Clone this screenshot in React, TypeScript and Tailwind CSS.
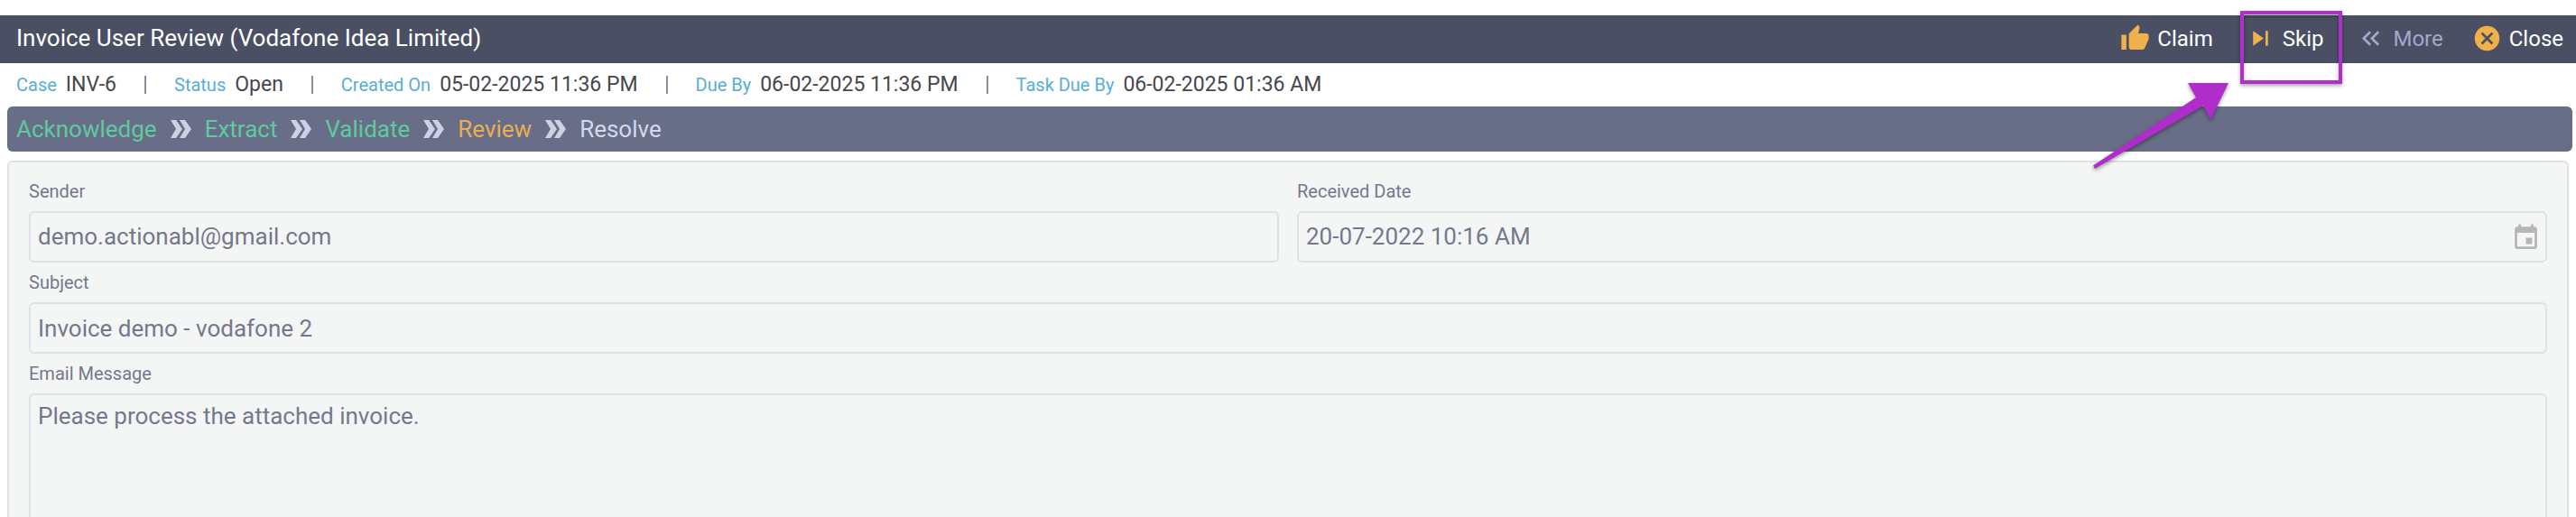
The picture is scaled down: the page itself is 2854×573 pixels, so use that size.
import { Fragment, type ReactNode } from "react";
import {
  MdCancel,
  MdEvent,
  MdKeyboardDoubleArrowLeft,
  MdSkipNext,
  MdThumbUp,
} from "react-icons/md";

const meta = [
  { label: "Case", value: "INV-6" },
  { label: "Status", value: "Open" },
  { label: "Created On", value: "05-02-2025 11:36 PM" },
  { label: "Due By", value: "06-02-2025 11:36 PM" },
  { label: "Task Due By", value: "06-02-2025 01:36 AM" },
];

const steps = [
  { name: "Acknowledge", color: "text-[#5fc9a0]" },
  { name: "Extract", color: "text-[#5fc9a0]" },
  { name: "Validate", color: "text-[#5fc9a0]" },
  { name: "Review", color: "text-[#e9ad57]" },
  { name: "Resolve", color: "text-[#d5d8ea]" },
];

const boxClass =
  "w-full rounded-md border-2 border-[#dfe1e9] bg-[#f4f6f6] px-2 text-[26px] text-[#74788c] outline-none";

function StepArrow() {
  return (
    <svg viewBox="0 0 23 20" className="h-5 w-[23px] shrink-0" fill="#cdd1e4" aria-hidden="true">
      <path d="M0 0h6l7 10-7 10H0l6-10z" />
      <path d="M10 0h6l7 10-7 10h-6l6-10z" />
    </svg>
  );
}

function Action({ icon, label, muted }: { icon: ReactNode; label: string; muted?: boolean }) {
  return (
    <button
      type="button"
      disabled={muted}
      className={`flex items-center gap-2 text-2xl ${muted ? "text-[#a3a8cb]" : "text-white"}`}
    >
      {icon}
      {label}
    </button>
  );
}

function Field({ id, label, children }: { id: string; label: string; children: ReactNode }) {
  return (
    <div className="flex min-w-0 flex-1 flex-col">
      <label htmlFor={id} className="flex h-11 items-center text-xl text-[#74788c]">
        {label}
      </label>
      {children}
    </div>
  );
}

function Callout() {
  return (
    <div className="pointer-events-none absolute -top-[14px] -left-[6px]">
      <div className="h-[81px] w-[113px] border-4 border-[#ae30c6] shadow-[0_2px_4px_rgba(0,0,0,0.35),inset_0_2px_4px_rgba(0,0,0,0.35)]" />
      <svg
        viewBox="0 0 162 108"
        className="absolute top-[76px] -left-[166px] h-[108px] w-[162px] drop-shadow-[0_2px_2px_rgba(0,0,0,0.4)]"
        fill="#b02ccb"
        aria-hidden="true"
      >
        <path d="M153 4 108 4 117 20 3 95.500 5 99 125 29 133 45z" />
      </svg>
    </div>
  );
}

export default function App() {
  return (
    <div className="h-screen overflow-hidden bg-white pt-[17px] font-[Roboto,sans-serif]">
      <header className="flex h-[53px] items-center justify-between bg-[#4a4f64] pr-[14px] pb-[2px] pl-[18px] text-white">
        <h1 className="text-[26px]">Invoice User Review (Vodafone Idea Limited)</h1>
        <div className="flex items-center gap-9">
          <Action icon={<MdThumbUp className="size-[33px] text-[#f0b14a]" />} label="Claim" />
          <div className="relative">
            <Action icon={<MdSkipNext className="size-[33px] text-[#f0b14a]" />} label="Skip" />
            <Callout />
          </div>
          <div className="flex items-center gap-8">
            <Action icon={<MdKeyboardDoubleArrowLeft className="size-[33px]" />} label="More" muted />
            <Action icon={<MdCancel className="size-[33px] text-[#f0b14a]" />} label="Close" />
          </div>
        </div>
      </header>

      <div className="flex h-12 items-center px-[18px]">
        {meta.map((item, i) => (
          <Fragment key={item.label}>
            {i > 0 && <span className="mx-[31px] h-5 w-[2px] bg-[#8c8a9e]" />}
            <div className="flex items-baseline gap-[10px]">
              <span className="text-xl text-[#57aed8]">{item.label}</span>
              <span className="text-[23px] text-[#45474d]">{item.value}</span>
            </div>
          </Fragment>
        ))}
      </div>

      <nav className="mr-1 ml-2 flex h-[50px] items-center gap-[15px] rounded-md bg-[#686e87] px-[10px] text-[26px]">
        {steps.map((step, i) => (
          <Fragment key={step.name}>
            {i > 0 && <StepArrow />}
            <span className={step.color}>{step.name}</span>
          </Fragment>
        ))}
      </nav>

      <main className="mt-[10px] mr-2 ml-2 flex flex-col rounded-md border-2 border-[#dfe1e9] bg-[#f4f6f6] px-[22px] pt-[10px] pb-6">
        <div className="flex gap-5">
          <Field id="sender" label="Sender">
            <input id="sender" readOnly value="demo.actionabl@gmail.com" className={`h-[57px] pb-[2px] ${boxClass}`} />
          </Field>
          <Field id="received" label="Received Date">
            <div className="relative">
              <input id="received" readOnly value="20-07-2022 10:16 AM" className={`h-[57px] pb-[2px] ${boxClass}`} />
              <MdEvent className="absolute top-[13px] right-[7px] size-[33px] text-[#b5b6b6]" />
            </div>
          </Field>
        </div>
        <Field id="subject" label="Subject">
          <input id="subject" readOnly value="Invoice demo - vodafone 2" className={`h-[57px] ${boxClass}`} />
        </Field>
        <Field id="message" label="Email Message">
          <textarea
            id="message"
            readOnly
            rows={8}
            value="Please process the attached invoice."
            className={`resize-none py-1 ${boxClass}`}
          />
        </Field>
      </main>
    </div>
  );
}
